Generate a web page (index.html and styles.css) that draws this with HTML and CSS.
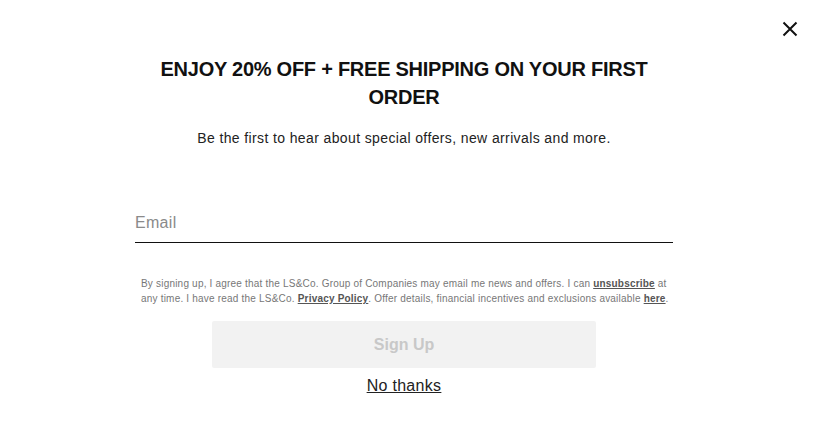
FILE: index.html
```html
<!DOCTYPE html>
<html>
<head>
<meta charset="utf-8">
<link rel="stylesheet" href="styles.css">
</head>
<body>
<div class="modal">
  <button class="close" aria-label="Close">
    <svg width="16" height="16" viewBox="0 0 16 16"><path d="M1.5 1.5 L14.5 14.5 M14.5 1.5 L1.5 14.5" stroke="#111" stroke-width="2" fill="none"/></svg>
  </button>
  <div class="content">
    <h1 class="title">ENJOY 20% OFF + FREE SHIPPING ON YOUR FIRST ORDER</h1>
    <p class="subtitle">Be the first to hear about special offers, new arrivals and more.</p>
    <div class="field">
      <input class="email" type="email" placeholder="Email">
    </div>
    <p class="legal">By signing up, I agree that the LS&amp;Co. Group of Companies may email me news and offers. I can <a href="#">unsubscribe</a> at any time. I have read the LS&amp;Co. <a href="#">Privacy Policy</a>. Offer details, financial incentives and exclusions available <a href="#">here</a>.</p>
    <button class="signup">Sign Up</button>
    <a class="nothanks" href="#">No thanks</a>
  </div>
</div>
</body>
</html>
```
FILE: styles.css
```css
* { box-sizing: border-box; }
html, body { margin: 0; padding: 0; background: #fff; }
body { font-family: "Liberation Sans", Arial, sans-serif; color: #111; }
.modal { position: relative; width: 818px; height: 430px; padding-top: 55px; padding-right: 10px; display: flex; justify-content: center; }
.close { position: absolute; top: 21px; right: 20px; width: 16px; height: 16px; padding: 0; border: 0; background: none; cursor: pointer; }
.close svg { display: block; }
.content { width: 538px; display: flex; flex-direction: column; align-items: center; }
.title { margin: 0; width: 500px; font-size: 20px; line-height: 28px; font-weight: 700; text-align: center; color: #111; letter-spacing: -0.25px; }
.subtitle { margin: 17px 0 0; font-size: 14px; line-height: 20px; text-align: center; color: #222; letter-spacing: 0.38px; }
.field { width: 100%; margin-top: 58px; border-bottom: 1.5px solid #111; }
.email { display: block; width: 100%; border: 0; outline: none; padding: 0 0 3px; height: 36px; font-family: inherit; font-size: 16px; color: #111; background: transparent; letter-spacing: 0.3px; }
.email::placeholder { color: #8a8a8a; }
.legal { width: 100%; margin: 33px 0 0; font-size: 10px; line-height: 15px; text-align: left; color: #777; padding: 0 0 0 6px; letter-spacing: 0.2px; }
.legal a { color: #555; font-weight: 700; text-decoration: underline; }
.signup { margin-top: 15px; width: 384px; height: 47px; border: 0; border-radius: 2px; background: #f2f2f2; color: #c8c8c8; font-family: inherit; font-size: 16px; font-weight: 700; }
.nothanks { margin-top: 7px; font-size: 16px; line-height: 22px; color: #222; text-decoration: underline; letter-spacing: 0.3px; }
```
